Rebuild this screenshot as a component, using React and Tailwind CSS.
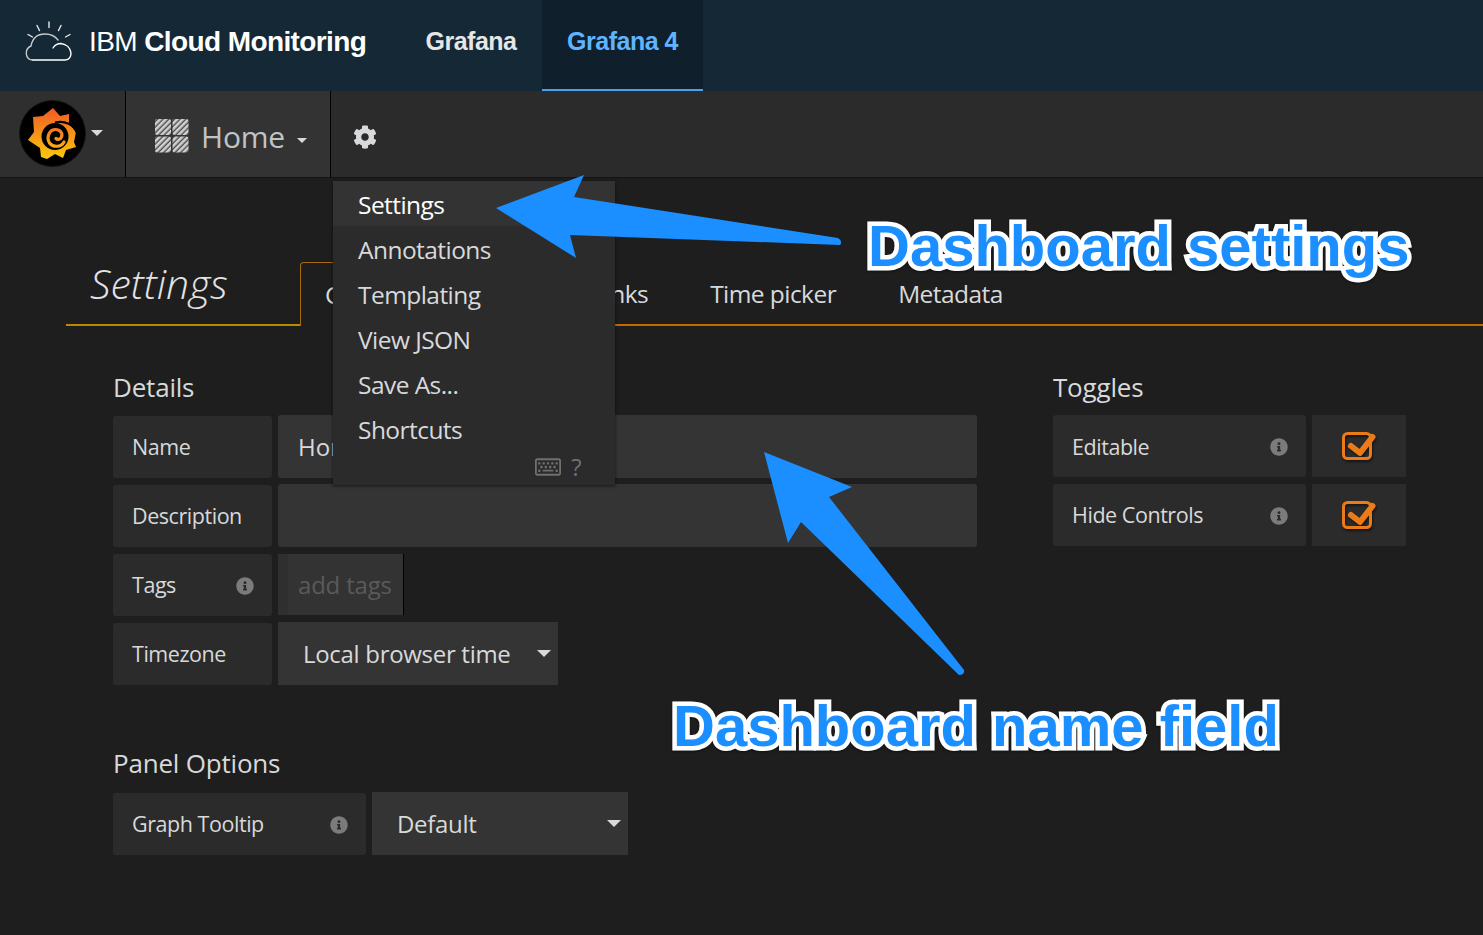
import React from 'react';
import { FaCog, FaInfoCircle, FaRegKeyboard } from 'react-icons/fa';

const Caret = ({ className = 'border-x-[7px] border-t-[7px]' }) => (
  <span className={`inline-block w-0 h-0 border-x-transparent border-t-[#d8d9da] ${className}`} />
);

const CloudLogo = () => (
  <svg width="50" height="44" viewBox="0 0 50 44" fill="none" stroke="#fff" strokeWidth="1.4" strokeLinecap="round" className="shrink-0">
    <path d="M25 2v5.500M13 5.500l2.500 5M37 5.500l-2.500 5M4 14.500l4.500 2.500M46 14.500l-4.500 2.500" strokeOpacity=".9" />
    <path d="M9 40H41C50 40 49 25 37 23.500C33 23.500 30.500 25.500 29 28" />
    <path d="M9 40C1 40 0 29 7 26C8.500 18 14 14 21 14C26 14 31 16 34 20" strokeOpacity=".75" />
  </svg>
);

const GrafanaLogo = () => (
  <svg width="68" height="68" viewBox="0 0 68 68" className="shrink-0">
    <defs>
      <linearGradient id="flame" x1="0" y1="0" x2="0" y2="1">
        <stop offset="0" stopColor="#f05a28" />
        <stop offset="1" stopColor="#fbca0a" />
      </linearGradient>
      <linearGradient id="ring" x1="0" y1="0" x2="0" y2="1">
        <stop offset="0" stopColor="#f47a20" />
        <stop offset="1" stopColor="#fba90f" />
      </linearGradient>
    </defs>
    <circle cx="33.500" cy="33.500" r="33" fill="#000" stroke="#151515" />
    <path
      d="M34 8 L41 16 L50 14 L50 23 L57 32 L55 42 L57 47 L47 50 L44 58 L36 54 L28 59 L22 57 L21 48 L9 40 L15 32 L14 17 L24 16 Z"
      fill="url(#flame)"
    />
    <circle cx="36" cy="36.500" r="13.500" fill="#000" />
    <path d="M36 22.500 C46 20 55 25 58 33" fill="none" stroke="#000" strokeWidth="2.200" />
    <path
      d="M45 42 C42 47.500 34 47.500 30.500 43 C27 37 30.500 29.500 36.500 29.500 C41 29.500 44 33 42.500 37 C41.500 39.500 38.500 40 37 38.500"
      fill="none"
      stroke="url(#ring)"
      strokeWidth="3.200"
      strokeLinecap="round"
    />
  </svg>
);

const HomeGrid = () => (
  <svg width="36" height="36" viewBox="0 0 36 36" className="mt-[4px] shrink-0">
    <defs>
      <pattern id="hatch" width="4" height="4" patternUnits="userSpaceOnUse" patternTransform="rotate(45)">
        <rect width="4" height="4" fill="#4a4a4a" />
        <rect width="2.600" height="4" fill="#d0d0d0" />
      </pattern>
    </defs>
    <rect x="1" y="1" width="16" height="16" rx="2" fill="url(#hatch)" />
    <rect x="18.500" y="1" width="16" height="16" rx="2" fill="url(#hatch)" />
    <rect x="1" y="18.500" width="16" height="16" rx="2" fill="url(#hatch)" />
    <rect x="18.500" y="18.500" width="16" height="16" rx="2" fill="url(#hatch)" />
  </svg>
);

const CheckIcon = () => (
  <svg width="36" height="32" viewBox="0 0 36 32" fill="none" className="drop-shadow-[1px_2px_1px_rgba(0,0,0,0.5)]">
    <rect x="2.500" y="3.500" width="27" height="25" rx="4" stroke="#eb7b18" strokeWidth="3" />
    <path d="M10 16L19 23L31.500 7" stroke="#eb7b18" strokeWidth="6" strokeLinecap="round" strokeLinejoin="round" />
  </svg>
);

const Label = ({ children, info, width = 'w-[159px]' }) => (
  <div className={`${width} h-[62px] shrink-0 rounded-[3px] bg-[#2b2b2b] flex items-center justify-between pl-[19px] pr-[18px] text-[21.500px] tracking-[-0.45px] text-[#d8d9da]`}>
    <span className="pt-[2px]">{children}</span>
    {info && <FaInfoCircle size={18} className="mt-[2px] text-[#7b7b7b]" />}
  </div>
);

const SelectBox = ({ children, width }) => (
  <div className={`${width} h-[63px] pl-[25px] pr-[7px] bg-[#343434] flex items-center justify-between text-[24px] tracking-[-0.3px] text-[#d8d9da]`}>
    <span>{children}</span>
    <Caret />
  </div>
);

const Toggle = ({ label }) => (
  <div className="flex gap-[6px]">
    <Label info width="w-[253px]">{label}</Label>
    <div className="w-[94px] h-[62px] bg-[#2b2b2b] flex items-center justify-center">
      <CheckIcon />
    </div>
  </div>
);

const menuItems = ['Annotations', 'Templating', 'View JSON', 'Save As...', 'Shortcuts'];
const calloutText = "font-['Liberation_Sans',sans-serif] font-bold text-[58px] leading-none text-[#1b8fff] whitespace-nowrap [-webkit-text-stroke:9px_#ffffff] [paint-order:stroke_fill] drop-shadow-[0_1px_1px_rgba(0,0,0,0.5)]";

export default function App() {
  return (
    <div className="relative w-[1483px] h-[935px] overflow-hidden bg-[#1f1e1f] font-['Open_Sans',sans-serif]">
      {/* IBM top bar */}
      <header className="h-[91px] bg-[#152836] flex pl-[24px] font-['Liberation_Sans',sans-serif]">
        <div className="w-[342px] flex items-center gap-[15px] pb-[8px]">
          <CloudLogo />
          <div className="text-[28px] text-white tracking-[-0.6px] whitespace-nowrap">
            IBM <span className="font-bold">Cloud Monitoring</span>
          </div>
        </div>
        <div className="ml-[34px] w-[142px] flex items-center justify-center pb-[8px] text-[25px] tracking-[-0.5px] font-bold text-[#e6e6e6]">Grafana</div>
        <div className="w-[161px] flex items-center justify-center pb-[6px] text-[25px] tracking-[-0.5px] font-bold text-[#60b4ff] bg-[#0f1f2c] border-b-2 border-[#4a9ff0]">Grafana 4</div>
      </header>

      {/* Grafana navbar */}
      <nav className="h-[87px] bg-[#2b2b2b] border-b border-[#141414] flex">
        <div className="w-[126px] bg-[#2f2f2f] border-r border-black flex items-center pl-[19px]">
          <GrafanaLogo />
          <Caret className="ml-[4px] mb-[2px] border-x-[6px] border-t-[6px]" />
        </div>
        <div className="w-[205px] bg-[#333333] border-r border-black flex items-center pl-[28px]">
          <HomeGrid />
          <span className="ml-[11px] pt-[5px] text-[30px] tracking-[-0.2px] text-[#c0c4c8]">Home</span>
          <Caret className="ml-[12px] mt-[12px] border-x-[5px] border-t-[5px]" />
        </div>
        <div className="flex items-center pl-[22px] pt-[5px]">
          <FaCog size={24} className="text-[#d8d9da]" />
        </div>
      </nav>

      {/* Tabs */}
      <div className="mt-[84px] ml-[66px] h-[64px] flex">
        <div className="w-[234px] border-b-2 border-[#b58a00] pl-[24px] text-[41px] leading-[42px] italic font-light text-[#e3e3e3]">Settings</div>
        <div className="w-[150px] border-x border-t rounded-t-[4px] border-[#a8690f] pl-[24px] pt-[14px] text-[24.500px] tracking-[-0.55px] text-[#d8d9da]">General</div>
        <div className="flex-1 flex gap-[62px] pt-[14px] pl-[22px] border-b-2 border-[#c26a00] text-[24.500px] tracking-[-0.55px] text-[#d8d9da]">
          <span>Rows</span>
          <span>Links</span>
          <span>Time picker</span>
          <span>Metadata</span>
        </div>
      </div>

      {/* Form */}
      <div className="ml-[113px] mt-[41px] flex">
        <div className="w-[864px]">
          <h3 className="h-[40px] text-[26px] leading-[40px] tracking-[-0.2px] text-[#d8d9da]">Details</h3>
          <div className="mt-[8px] flex flex-col gap-[6px]">
            <div className="h-[63px] flex gap-[6px] items-center">
              <Label>Name</Label>
              <div className="flex-1 h-[63px] rounded-[3px] bg-[#343434] pl-[20px] flex items-center text-[24px] text-[#d8d9da]">Home</div>
            </div>
            <div className="h-[63px] flex gap-[6px] items-center">
              <Label>Description</Label>
              <div className="flex-1 h-[63px] rounded-[3px] bg-[#343434]" />
            </div>
            <div className="h-[63px] flex gap-[6px] items-center">
              <Label info>Tags</Label>
              <div className="w-[126px] h-[61px] bg-[#333333] border-r border-black flex items-center">
                <div className="w-[10px] h-full bg-[#2f2f2f]" />
                <span className="ml-[10px] text-[24px] tracking-[-0.2px] text-[#5a5a5a]">add tags</span>
              </div>
            </div>
            <div className="h-[63px] flex gap-[6px] items-center">
              <Label>Timezone</Label>
              <SelectBox width="w-[280px]">Local browser time</SelectBox>
            </div>
          </div>

          <h3 className="mt-[58px] h-[40px] text-[26px] leading-[40px] tracking-[-0.2px] text-[#d8d9da]">Panel Options</h3>
          <div className="mt-[9px] flex gap-[6px] items-center">
            <Label info width="w-[253px]">Graph Tooltip</Label>
            <SelectBox width="w-[256px]">Default</SelectBox>
          </div>
        </div>

        <div className="ml-[76px] w-[353px]">
          <h3 className="h-[40px] text-[26px] leading-[40px] tracking-[-0.2px] text-[#d8d9da]">Toggles</h3>
          <div className="mt-[8px] flex flex-col gap-[6.500px]">
            <Toggle label="Editable" />
            <Toggle label="Hide Controls" />
          </div>
        </div>
      </div>

      {/* Settings dropdown over the tabs */}
      <div className="absolute left-[333px] top-[181px] w-[282px] h-[304px] bg-[#2b2b2b] shadow-[0_1px_3px_rgba(0,0,0,0.6)] text-[24.500px] tracking-[-0.55px] text-[#d8d9da]">
        <div className="h-[45px] pl-[25px] pt-[3px] flex items-center bg-[#333333] text-white">Settings</div>
        {menuItems.map(item => (
          <div key={item} className="h-[45px] pl-[25px] pt-[3px] flex items-center">{item}</div>
        ))}
        <div className="flex items-center justify-end gap-[10px] pr-[34px] text-[#6f6f6f]">
          <FaRegKeyboard size={26} />
          <span className="text-[24px] leading-[32px]">?</span>
        </div>
      </div>

      {/* Annotation arrows */}
      <svg className="absolute left-0 top-0 pointer-events-none" width="1483" height="935" viewBox="0 0 1483 935">
        <path
          d="M496 208 L584 175 L574 197 L838 238 Q843 241 840 245 L570 235 L576 258 Z"
          fill="#1b8fff"
        />
        <path
          d="M764 452 L852 487 L829 497 L964 670 Q965 675 959 675 L801 522 L788 543 Z"
          fill="#1b8fff"
        />
      </svg>
      <div className={`absolute left-[868px] top-[217px] ${calloutText}`}>Dashboard settings</div>
      <div className={`absolute left-[673px] top-[697px] ${calloutText}`}>Dashboard name field</div>
    </div>
  );
}
